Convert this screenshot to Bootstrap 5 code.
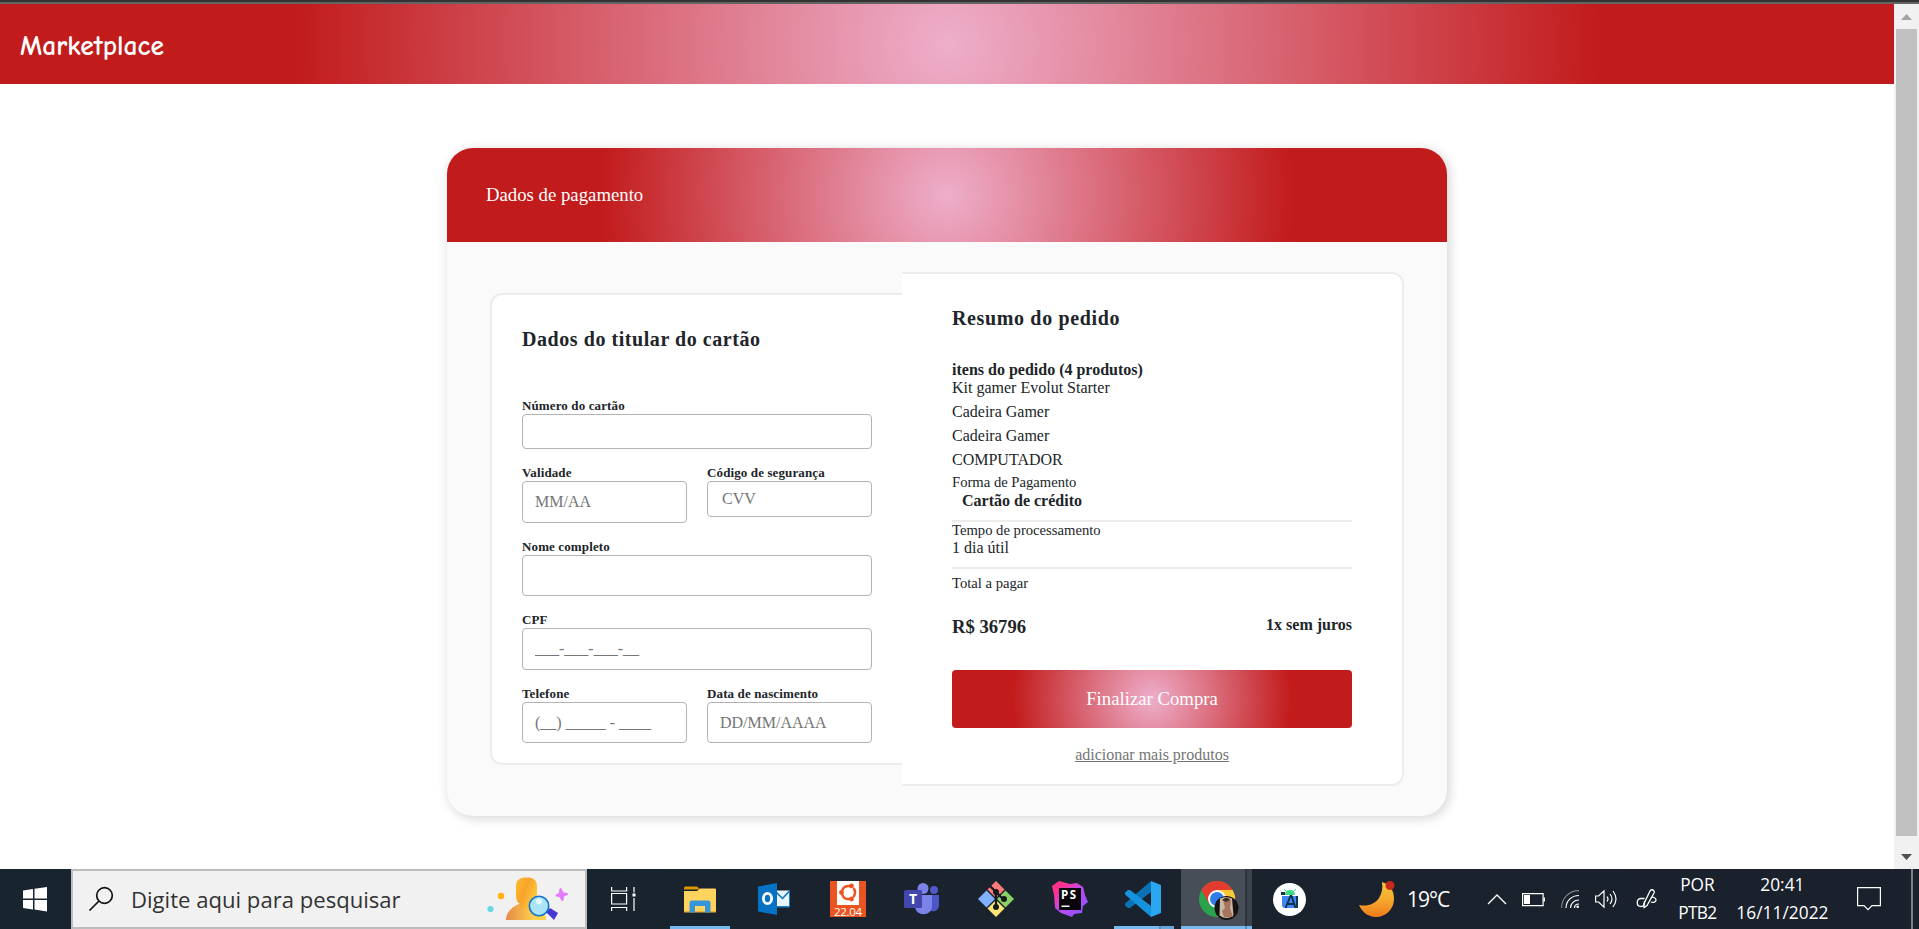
<!DOCTYPE html>
<html lang="pt-BR">
<head>
<meta charset="utf-8">
<title>Marketplace</title>
<link href="https://cdn.jsdelivr.net/npm/bootstrap@5.3.0/dist/css/bootstrap.min.css" rel="stylesheet">
<style>
:root { --glow: radial-gradient(circle, rgb(238,174,202) 0%, rgb(194,27,27) 69%); --line: #efebe9; }
html { height: 929px; overflow: hidden; }
body { font-family: "Liberation Serif", serif; color: #212529; height: 929px; overflow: hidden; line-height: 1.125; background: #fff; }
.edge { height: 4px; background: #333; border-bottom: 2px solid #646464; }
.view { height: 865px; }
.topbar { height: 80px; background: var(--glow); padding: 5px 20px 0; }
.brand { font: 700 27.5px/1 "Comic Sans MS", "Comic Neue", cursive; color: #fff; }
.sheet { width: 1000px; height: 668px; margin: 64px auto 0; border-radius: 26px; background: #fafafa; box-shadow: 2px 2px 12px rgba(0,0,0,.18); }
.sheet-head { height: 94px; background: var(--glow); border-radius: 26px 26px 0 0; padding-left: 39px; color: #fff; font-size: 18.75px; }
.panel-l { width: 412px; height: 472px; margin: 51px 0 0 43px; border: 2px solid var(--line); border-right: 0; border-radius: 12px 0 0 12px; padding: 32px 30px 0; background: #fff; }
.panel-r { width: 502px; height: 514px; margin-top: 30px; border: 2px solid var(--line); border-left: 0; border-radius: 0 12px 12px 0; padding: 32px 50px 0; background: #fff; }
.title { font-size: 20px; font-weight: 700; letter-spacing: .56px; line-height: 24px; margin: 0; white-space: nowrap; }
.panel-r .title { letter-spacing: .64px; margin-bottom: 31px; }
.fields { margin-top: 47px; gap: 16px; }
.pair { gap: 20px; }
.fields label { display: block; font-size: 13px; font-weight: 700; line-height: 16px; letter-spacing: .12px; white-space: nowrap; }
.fields .form-control { height: 41px; border: 1px solid #b3b3b3; border-radius: 4px; padding: 0 12px; font-size: 16px; color: #757575; background: #fff; line-height: 39px; }
.fields .form-control::placeholder { color: #757575; opacity: 1; }
.fields .h35 { height: 35px; } .fields .h36 { height: 36px; padding: 0 14px; line-height: 34px; } .fields .h42 { height: 42px; }
.txt { font-size: 16px; line-height: 18px; }
.cap { font-size: 14.65px; line-height: 17px; padding-bottom: 1px; }
.item { margin-top: 6px; }
.pay { margin-top: 5px; }
.method { padding-left: 10px; }
.term { margin-top: -1px; }
.rule { height: 2px; background: var(--line); margin-top: 10px; }
.total { margin-top: 23px; height: 54px; }
.price { font-size: 18.65px; line-height: 22px; }
.buy { height: 58px; background: var(--glow); border: 0; border-radius: 4px; color: #fff; font-size: 18.75px; }
.again { margin-top: 18px; }
.again a { color: #757575; }
.scroller { width: 25px; background: #f1f1f1; }
.thumb { width: 21px; height: 807px; background: #c1c1c1; margin: 9px 0 18px; }
.task { height: 60px; background: linear-gradient(90deg,#18252f,#1a222d 60%,#1a212c); color: #fff; font-family: "Segoe UI", "Open Sans", sans-serif; }
.start { width: 71px; padding-right: 1px; }
.seek { width: 516px; background: #f1f1f1; border: 2px solid #bdbdbd; color: #333; font-size: 22.1px; padding-left: 16px; }
.seek span { margin: 0 14px 0 18px; width: 341px; white-space: nowrap; }
.slot { width: 73.9px; height: 60px; position: relative; flex: none; }
.slot.first { width: 76.2px; padding-right: 3px; }
.slot.last { padding-right: 4px; }
.slot::after { content: ""; position: absolute; bottom: 0; height: 3px; left: 7px; width: 60px; }
.slot.open::after { background: #76b9ed; }
.slot.multi::after { background: linear-gradient(90deg,#76b9ed 75%,#5a8bb4 75%,#5a8bb4 78%,#6aa5d8 78%); }
.slot.live::before { content: ""; position: absolute; left: .5px; top: 0; bottom: 0; width: 71px; background: linear-gradient(90deg,#474e57 64px,#2c333c 64px 66px,#3b424b 66px); }
.slot.live::after { left: .5px; width: 71px; background: linear-gradient(90deg,#76b9ed 64px,#5a8bb4 64px 66px,#76b9ed 66px); }
.slot svg { position: relative; }
svg { display: block; flex: none; overflow: visible; }
.tray { margin-left: 30.700px; font-size: 17.300px; line-height: 28px; text-align: center; }
.temp { font-size: 21px; width: 44px; letter-spacing: -1px; margin: 0 37px 0 12px; text-align: left; }
.status { gap: 16px; }
.lang { margin-left: 21px; width: 39px; }
.lang span { letter-spacing: -.7px; }
.clock { margin: 0 27px 0 18px; width: 95px; letter-spacing: .05px; }
.peek { margin-left: 30px; width: 2px; height: 60px; background: #7d8288; }
</style>
</head>
<body>
<div class="edge"></div>
<div class="view d-flex">
  <main class="flex-grow-1">
    <nav class="topbar d-flex align-items-center"><span class="brand">Marketplace</span></nav>
    <section class="sheet">
      <header class="sheet-head d-flex align-items-center">Dados de pagamento</header>
      <div class="d-flex align-items-start">
        <div class="panel-l">
          <h2 class="title">Dados do titular do cartão</h2>
          <form class="fields d-flex flex-column">
            <div><label>Número do cartão</label><input class="form-control h35"></div>
            <div class="pair d-flex">
              <div class="w-50"><label>Validade</label><input class="form-control h42" placeholder="MM/AA"></div>
              <div class="w-50"><label>Código de segurança</label><input class="form-control h36" placeholder="CVV"></div>
            </div>
            <div><label>Nome completo</label><input class="form-control"></div>
            <div><label>CPF</label><input class="form-control h42" placeholder="___-___-___-__"></div>
            <div class="pair d-flex">
              <div class="w-50"><label>Telefone</label><input class="form-control" placeholder="(__) _____ - ____"></div>
              <div class="w-50"><label>Data de nascimento</label><input class="form-control" placeholder="DD/MM/AAAA"></div>
            </div>
          </form>
        </div>
        <div class="panel-r">
          <h2 class="title">Resumo do pedido</h2>
          <div class="txt fw-bold">itens do pedido (4 produtos)</div>
          <div class="txt">Kit gamer Evolut Starter</div>
          <div class="txt item">Cadeira Gamer</div>
          <div class="txt item">Cadeira Gamer</div>
          <div class="txt item">COMPUTADOR</div>
          <div class="cap pay">Forma de Pagamento</div>
          <div class="txt fw-bold method">Cartão de crédito</div>
          <div class="rule"></div>
          <div class="cap">Tempo de processamento</div>
          <div class="txt term">1 dia útil</div>
          <div class="rule"></div>
          <div class="cap item">Total a pagar</div>
          <div class="total d-flex justify-content-between align-items-start fw-bold"><span class="price">R$ 36796</span><span class="txt">1x sem juros</span></div>
          <button class="btn buy w-100 d-block p-0">Finalizar Compra</button>
          <div class="again txt text-center"><a href="#">adicionar mais produtos</a></div>
        </div>
      </div>
    </section>
  </main>
  <aside class="scroller d-flex flex-column align-items-center">
    <svg class="mt-2" width="11" height="8"><path d="M5.500 2 11 8H0z" fill="#a3a3a3"/></svg>
    <div class="thumb"></div>
    <svg width="11" height="6"><path d="M0 0h11L5.500 6z" fill="#505050"/></svg>
  </aside>
</div>
<footer class="task d-flex">
  <div class="start d-flex align-items-center justify-content-center"><svg width="24" height="24"><path d="M0 3.500 10 2v9.500H0zM11.500 1.800 24 0v11.500H11.500zM0 13h10v9.500L0 21zM11.500 13H24v11.500l-12.500-1.900z" fill="#fff"/></svg></div>
  <div class="seek d-flex align-items-center">
    <svg width="24" height="24" fill="none" stroke="#111" stroke-width="1.700"><circle cx="15.500" cy="8.500" r="7.800"/><path d="M10 14 .5 23.500"/></svg>
    <span>Digite aqui para pesquisar</span>
    <svg width="84" height="46">
      <defs><linearGradient id="hd" x1="0" y1="0" x2="1" y2=".6"><stop stop-color="#fdbb2c"/><stop offset=".5" stop-color="#f7a42b"/><stop offset="1" stop-color="#fdc93c"/></linearGradient><linearGradient id="bd"><stop stop-color="#e58a4b"/><stop offset=".7" stop-color="#ffd04a"/></linearGradient></defs>
      <path d="M20 44c0-8 6-13 13-16h14c8 3 13 8 13 16z" fill="url(#bd)"/><path d="M30 11c0-7 3-9.500 10.500-9.500S51 4 51 11v7c0 7-2 9-4 10v4H34v-4c-2-1-4-3-4-10z" fill="url(#hd)"/>
      <path d="m60 36 4-4 8 5-4 7z" fill="#4338d1"/><circle cx="53" cy="30" r="9.700" fill="#abe5f5" stroke="#1473cf" stroke-width="1.600"/><circle cx="53" cy="25.500" r="3" fill="#e3f8fc"/>
      <circle cx="15" cy="20" r="3.200" fill="#ffb300"/><circle cx="4.500" cy="33" r="3.100" fill="#67d7e5"/><path d="M74.500 12c1.500 0 2 4 3.500 4.500s4 0 4 1.500-3.500 1.500-4 3 0 4-1.500 4-2-3.500-3.500-4-3.500 0-3.500-1.500 3-1.500 3.500-3 0-4.500 1.500-4.500z" fill="#e47bff"/>
    </svg>
  </div>
  <div class="slot first d-flex align-items-center justify-content-center"><svg width="25" height="24" fill="none" stroke="#fff" stroke-width="1.200"><path d="M.6 0v4h15V0M.6 24v-3.500h15V24M.6 6.500h15V17H.6zM23 0v5.500M23 11v13"/><path d="M21.500 6.500h3v3h-3z" fill="#fff" stroke="none"/></svg></div>
  <div class="slot open d-flex align-items-center justify-content-center"><svg width="32" height="27"><path d="M0 2Q0 .5 1.500.5H13l3 3H0z" fill="#dd9700"/><path d="M0 5h13l3-2.500h15q1 0 1 1V25H0z" fill="#ffd45e"/><path d="M0 25h32v1.500H0z" fill="#edb12f"/><path d="M5.500 26.500V17q0-2.500 2.500-2.500h16.500q2 0 2 2.500v9.500H21V20H11v6.500z" fill="#3795da"/></svg></div>
  <div class="slot d-flex align-items-center justify-content-center"><svg width="32" height="32"><path d="M17 7.500h14.500V24H17z" fill="#e9f4fb"/><path d="m17 8 7.500 7.500L31.500 8" fill="none" stroke="#0a6cbd" stroke-width="1.500"/><path d="M17 23h14.500v1.500H17zM31 8h1v16h-1z" fill="#1481d0"/><path d="M0 3.500 19 0v32L0 28.500z" fill="#0572c6"/><ellipse cx="9.500" cy="15.500" rx="4.100" ry="5.200" fill="none" stroke="#fff" stroke-width="2.800"/></svg></div>
  <div class="slot d-flex align-items-center justify-content-center"><svg width="36" height="36"><path d="M0 0h36v36H0z" fill="#e95420"/><path d="M7 0h22v24H7z" fill="#fff"/><circle cx="18.500" cy="11.500" r="6.600" fill="none" stroke="#e95420" stroke-width="2.500" stroke-dasharray="10 3.800" stroke-dashoffset="5"/><g fill="#e95420"><circle cx="11.500" cy="11.500" r="2.400"/><circle cx="21.500" cy="5" r="2.400"/><circle cx="21.500" cy="18" r="2.400"/></g><text x="18" y="34.500" font-size="11.500" fill="#fff" text-anchor="middle" textLength="28">22.04</text></svg></div>
  <div class="slot d-flex align-items-center justify-content-center"><svg width="36" height="32"><circle cx="30" cy="7" r="4" fill="#5059c9"/><path d="M24 12h11v9c0 7-5 9-11 6z" fill="#4c56c7"/><circle cx="19" cy="5.500" r="5.500" fill="#7b83eb"/><path d="M11 12h17v11c0 11-17 11-17 0z" fill="#7b83eb"/><rect y="7" width="18" height="18" rx="1.500" fill="#4347ad"/><text x="9" y="21" font-size="14" font-weight="700" fill="#fff" text-anchor="middle">T</text></svg></div>
  <div class="slot d-flex align-items-center justify-content-center"><svg width="36" height="36"><path d="m18 0 8.500 8.500-8.500 8.500-8.500-8.500z" fill="#ff7b7b"/><path d="m27.500 9.500 8.500 8.500-8.500 8.500L19 18z" fill="#8bd163"/><path d="m8.500 9.500 8.500 8.500-8.500 8.500L0 18z" fill="#81b1ff"/><path d="m18 19 8.500 8.500L18 36l-8.500-8.500z" fill="#ffe575"/><path d="M12 5l6 6v15M18 11l7 7" fill="none" stroke="#15191d" stroke-width="2.300"/><g fill="#15191d"><circle cx="18" cy="11" r="3"/><circle cx="26" cy="18" r="3"/><circle cx="18" cy="26" r="3"/></g></svg></div>
  <div class="slot d-flex align-items-center justify-content-center"><svg width="36" height="36"><defs><linearGradient id="ps" x1="0" y1="0" x2="1" y2="1"><stop stop-color="#ff318c"/><stop offset=".2" stop-color="#ff318c"/><stop offset=".5" stop-color="#c04cf0"/><stop offset="1" stop-color="#7b55ff"/></linearGradient></defs><path d="m0 5 7-5 11 3 7-1 6 4 2 8 3 7-5 4-1 7-8 1-2 3-11-4-6-5L2 14z" fill="url(#ps)"/><path d="M7 7h22v22H7z" fill="#08050b"/><text x="9" y="17.500" font-size="11.500" font-weight="700" fill="#fff" textLength="15">PS</text><path d="M9.500 24.500h8V26h-8z" fill="#fff"/></svg></div>
  <div class="slot open multi d-flex align-items-center justify-content-center"><svg width="36" height="36"><path d="M26 0 0 22.500v2L3 27h2L26 11z" fill="#0b72b8"/><path d="M5 9H3L0 11.500v2L26 36V25z" fill="#1593dc"/><path d="m26 0 10 4v28l-10 4z" fill="#29a7f2"/></svg></div>
  <div class="slot live d-flex align-items-center justify-content-center"><svg width="36" height="36"><circle cx="18" cy="18" r="18" fill="#2ba24c"/><path d="M2.400 9A18 18 0 0 1 33.600 9H18l-8 13.500z" fill="#e33b2e"/><path d="M33.600 9A18 18 0 0 1 18 36l8-13.500L18 9z" fill="#fcc934"/><circle cx="18" cy="18" r="9" fill="#fff"/><circle cx="18" cy="18" r="7" fill="#2f7de9"/><circle cx="27.500" cy="27" r="12" fill="#161312"/><path d="M21 17.500q6-3 12 0l1.500 17q-7 5-14 0z" fill="#c8b8a8"/><path d="M24 19q5-5 8 1l-1 7 3 9h-9l-2-6 3-3z" fill="#a8755c"/><path d="M23 19q5-5 8 0l-4 2z" fill="#42302a"/></svg></div>
  <div class="slot last d-flex align-items-center justify-content-center"><svg width="33" height="33"><circle cx="16.500" cy="16.500" r="16.500" fill="#fff"/><path d="M9 13h16v9q0 3-3 3H12q-3 0-3-3z" fill="#4285f4"/><path d="M12 12q0-5 5-5t5 5z" fill="#3ddc84"/><path d="m13 8-2-2m10 2 2-2" stroke="#3ddc84"/><path d="M8 9h4v3H8z" fill="#14354c"/><path d="m12.500 25 5-12h1l4 12m-7.500-4h6M24 13v12" fill="none" stroke="#083042" stroke-width="1.800"/></svg></div>
  <!-- system tray -->
  <div class="tray d-flex align-items-center">
    <svg width="36" height="36"><defs><linearGradient id="mn" x1="0" y1="0" x2="0" y2="1"><stop stop-color="#f2ca3e"/><stop offset=".5" stop-color="#f5aa2f"/><stop offset="1" stop-color="#ef7a1b"/></linearGradient></defs><path d="M23 1c9 3 12 9 12 17 0 10-8 18-18 18-8 0-14-5-17-12 8 2 16-1 20-7 3-5 4-10 3-16z" fill="url(#mn)"/><circle cx="31" cy="4.500" r="4.500" fill="#c92a1d"/></svg>
    <span class="temp">19°C</span>
    <div class="status d-flex align-items-center">
      <svg width="18" height="10" fill="none" stroke="#fff" stroke-width="1.400"><path d="m0 10 9-9 9 9"/></svg>
      <svg width="23" height="13"><path d="M.6.600h20.500v12H.6z" fill="none" stroke="#fff" stroke-width="1.200"/><path d="M2 2h6v9H2zM21.500 4.500h1.500v4h-1.500z" fill="#fff"/></svg>
      <svg width="18" height="18" fill="none" stroke="#fff" stroke-width="1.200"><path d="M.6 18C.6 8 8 .6 18 .6" stroke="#7d8389"/><path d="M5 18c0-7 5.500-12.500 13-12.500M9.500 18c0-4.500 3.500-8 8.500-8M13.500 18c0-2.500 2-4 4.500-4"/><circle cx="16.700" cy="16.700" r="1.300" fill="#fff" stroke="none"/></svg>
      <svg width="26" height="18" fill="none" stroke="#fff" stroke-width="1.200"><path d="M.6 6h3L9 .8v16.400L3.600 12h-3zM12 6.500q2 2.500 0 5M15 4q4 5 0 10M18 1q6 8 0 16"/></svg>
      <svg width="20" height="20" fill="none" stroke="#fff" stroke-width="1.300"><path d="M7.500 9.500H4c-5 0-5 8 0 8 4 0 3.500-3 3.500-5.500M14 9c1.500-2 5 0 5 2s-3 3-5 2"/><path d="M7 18.500 6.800 15 13 2q2-2.500 4 0 .5 1 0 2L10 16.500z"/></svg>
    </div>
    <div class="lang"><div>POR</div><div><span>PTB2</span></div></div>
    <div class="clock"><div>20:41</div><div>16/11/2022</div></div>
    <svg width="24" height="24" fill="none" stroke="#fff" stroke-width="1.200"><path d="M.6.600h22.800v18H15l-4 4-4-4H.6z"/></svg>
    <div class="peek"></div>
  </div>
</footer>
<script src="https://cdn.jsdelivr.net/npm/bootstrap@5.3.0/dist/js/bootstrap.bundle.min.js"></script>
</body>
</html>
